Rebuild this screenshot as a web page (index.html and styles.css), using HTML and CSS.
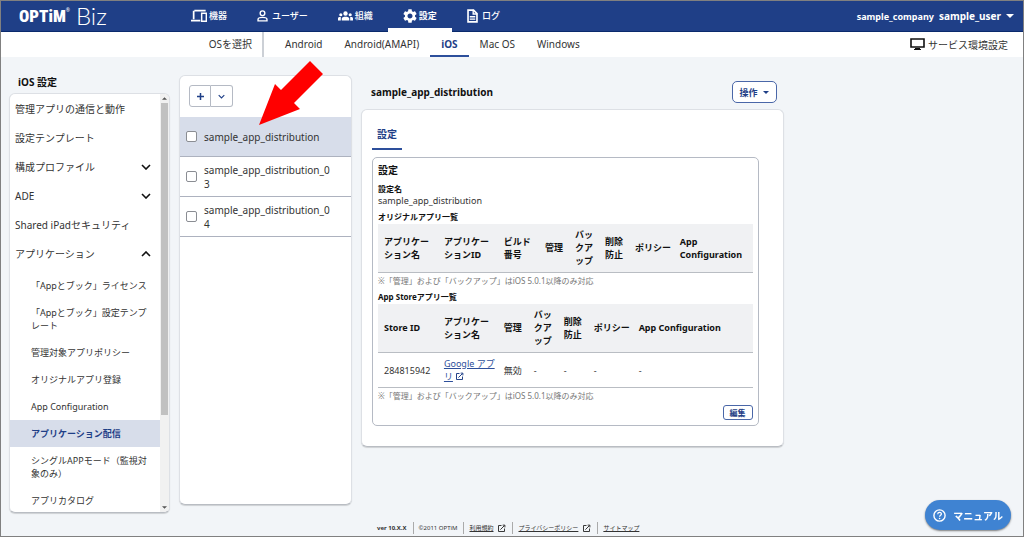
FILE: index.html
```html
<!DOCTYPE html>
<html lang="ja">
<head>
    <meta charset="UTF-8">
    <meta name="viewport" content="width=device-width, initial-scale=1.0">
    <title>OPTiM Biz - iOS 設定</title>
    <link rel="stylesheet" href="styles.css">
</head>
<body>
    <svg class="sprite" aria-hidden="true">
        <symbol id="icon-external" viewBox="0 0 24 24">
            <path d="M12 4H4v16h16v-8M15 3h6v6M20 4L9 15" fill="none" stroke="currentColor" stroke-width="2.6"/>
        </symbol>
        <symbol id="icon-down" viewBox="0 0 10 6">
            <path d="M1 1l4 4 4-4" fill="none" stroke="currentColor" stroke-width="1.6"/>
        </symbol>
        <symbol id="icon-caret" viewBox="0 0 10 5">
            <path d="M0 0h10L5 5z" fill="currentColor"/>
        </symbol>
    </svg>

    <header class="header">
        <a class="logo" href="#"><span class="logo-optim">OPTiM</span><sup>®</sup><span class="logo-biz">Biz</span></a>
        <nav class="main-nav">
            <a href="#">
                <svg width="16" height="14" viewBox="0 0 24 20"><path d="M5 2h17M4 2v13M0 17h14" fill="none" stroke="currentColor" stroke-width="2.6"/><path d="M16 6h7v12h-7z" fill="none" stroke="currentColor" stroke-width="2.2"/></svg>
                機器
            </a>
            <a href="#" class="nav-user">
                <svg width="11" height="14" viewBox="0 0 16 18"><circle cx="8" cy="5" r="3.4" fill="none" stroke="currentColor" stroke-width="2"/><path d="M1.5 16v-2c0-2 3.500-3 6.500-3s6.500 1 6.500 3v2z" fill="none" stroke="currentColor" stroke-width="2"/></svg>
                ユーザー
            </a>
            <a href="#">
                <svg width="15" height="14" viewBox="0 0 24 20"><g fill="currentColor"><circle cx="12" cy="6" r="3.500"/><circle cx="4.500" cy="8" r="2.500"/><circle cx="19.500" cy="8" r="2.500"/><path d="M6 17v-3c0-2 3-3 6-3s6 1 6 3v3zM0 17v-3c0-2 2-2.500 4.500-2.300V17zM24 17v-3c0-2-2-2.500-4.500-2.300V17z"/></g></svg>
                組織
            </a>
            <a href="#" class="active">
                <svg width="14" height="14" viewBox="2 2 20 20"><path fill="currentColor" d="M19.140 12.940c.04-.3.060-.61.060-.94 0-.32-.02-.64-.07-.94l2.030-1.580c.18-.14.230-.41.120-.61l-1.920-3.320c-.12-.22-.37-.29-.59-.22l-2.390.96c-.5-.38-1.030-.7-1.620-.94l-.36-2.540c-.04-.24-.24-.41-.48-.41h-3.840c-.24 0-.43.170-.47.410l-.36 2.540c-.59.240-1.130.570-1.620.940l-2.390-.96c-.22-.08-.47 0-.59.220L2.740 8.870c-.12.210-.08.470.120.610l2.030 1.580c-.05.300-.09.630-.09.940s.02.640.070.940l-2.030 1.580c-.18.140-.23.410-.12.610l1.920 3.320c.12.220.370.290.590.220l2.390-.96c.5.380 1.030.700 1.620.940l.36 2.540c.05.240.240.410.480.410h3.840c.24 0 .44-.17.470-.41l.36-2.540c.59-.24 1.130-.56 1.620-.94l2.390.96c.22.080.470 0 .59-.22l1.920-3.320c.12-.22.070-.47-.12-.61l-2.010-1.580zM12 15.600c-1.980 0-3.600-1.620-3.600-3.600s1.620-3.600 3.600-3.600 3.600 1.620 3.600 3.600-1.620 3.600-3.600 3.600z"/></svg>
                設定
            </a>
            <a href="#" class="nav-log">
                <svg width="11" height="14" viewBox="0 0 16 20"><path d="M1.500 1.500h8l5 5v12h-13z" fill="none" stroke="currentColor" stroke-width="2.400"/><path d="M9 1v6h6M4 11h8M4 14.500h8" fill="none" stroke="currentColor" stroke-width="2"/></svg>
                ログ
            </a>
        </nav>
        <button type="button" class="account">
            <span class="company">sample_company</span>
            <span class="user">sample_user</span>
            <svg width="8" height="4"><use href="#icon-caret"/></svg>
        </button>
    </header>

    <nav class="sub-nav">
        <span class="os-label">OSを選択</span>
        <a href="#">Android</a>
        <a href="#">Android(AMAPI)</a>
        <a href="#" class="active">iOS</a>
        <a href="#">Mac OS</a>
        <a href="#">Windows</a>
        <a href="#" class="env">
            <svg width="15" height="13" viewBox="0 0 15 13"><path d="M1 1h13v8H1z" fill="none" stroke="#111" stroke-width="1.600"/><path d="M5 10h5v1h1v1H4v-1h1z" fill="#111"/></svg>
            サービス環境設定
        </a>
    </nav>

    <main class="main">
        <aside class="sidebar">
            <h2>iOS 設定</h2>
            <div class="panel menu-panel">
                <ul class="menu">
                    <li><a href="#">管理アプリの通信と動作</a></li>
                    <li><a href="#">設定テンプレート</a></li>
                    <li><a href="#">構成プロファイル<svg width="10" height="6"><use href="#icon-down"/></svg></a></li>
                    <li><a href="#">ADE<svg width="10" height="6"><use href="#icon-down"/></svg></a></li>
                    <li><a href="#">Shared iPadセキュリティ</a></li>
                    <li>
                        <a href="#">アプリケーション<svg class="up" width="10" height="6"><use href="#icon-down"/></svg></a>
                        <ul class="submenu">
                            <li><a href="#">「Appとブック」ライセンス</a></li>
                            <li><a href="#">「Appとブック」設定テンプレート</a></li>
                            <li><a href="#">管理対象アプリポリシー</a></li>
                            <li><a href="#">オリジナルアプリ登録</a></li>
                            <li><a href="#">App Configuration</a></li>
                            <li><a href="#" class="active">アプリケーション配信</a></li>
                            <li><a href="#">シングルAPPモード（監視対象のみ）</a></li>
                            <li><a href="#">アプリカタログ</a></li>
                        </ul>
                    </li>
                </ul>
                <div class="scrollbar">
                    <svg class="up" width="5" height="3"><use href="#icon-caret"/></svg>
                    <div class="track"><div class="thumb"></div></div>
                    <svg width="5" height="3"><use href="#icon-caret"/></svg>
                </div>
            </div>
        </aside>

        <section class="panel list-panel">
            <div class="toolbar">
                <button type="button" aria-label="追加"><svg width="9" height="9" viewBox="0 0 9 9"><path d="M4.500 1v7M1 4.500h7" stroke="currentColor" stroke-width="1.500"/></svg></button>
                <button type="button" aria-label="メニュー"><svg width="7" height="5"><use href="#icon-down"/></svg></button>
            </div>
            <ul class="config-list">
                <li class="selected"><input type="checkbox" id="config1"><label for="config1">sample_app_distribution</label></li>
                <li><input type="checkbox" id="config2"><label for="config2">sample_app_distribution_03</label></li>
                <li><input type="checkbox" id="config3"><label for="config3">sample_app_distribution_04</label></li>
            </ul>
            <svg class="pointer" width="64" height="64" viewBox="0 0 64 64"><path d="M0 64L16 23l6 6L51 0l13 13-29 29 6 6z" fill="#f00"/></svg>
        </section>

        <section class="detail">
            <div class="detail-head">
                <h1>sample_app_distribution</h1>
                <button type="button" class="btn">操作<svg width="6" height="3"><use href="#icon-caret"/></svg></button>
            </div>
            <div class="panel detail-panel">
                <a href="#" class="tab">設定</a>
                <div class="card">
                    <h2>設定</h2>
                    <h3>設定名</h3>
                    <p class="name">sample_app_distribution</p>
                    <h3 class="table-title">オリジナルアプリ一覧</h3>
                    <table>
                        <colgroup>
                            <col class="w-l"><col class="w-l"><col class="w-m"><col class="w-s"><col class="w-s"><col class="w-s"><col class="w-p"><col>
                        </colgroup>
                        <thead>
                            <tr>
                                <th>アプリケーション名</th>
                                <th>アプリケーションID</th>
                                <th>ビルド<br>番号</th>
                                <th>管理</th>
                                <th>バックアップ</th>
                                <th>削除防止</th>
                                <th>ポリシー</th>
                                <th>App<br>Configuration</th>
                            </tr>
                        </thead>
                    </table>
                    <p class="note">※「管理」および「バックアップ」はiOS 5.0.1以降のみ対応</p>
                    <h3 class="table-title">App Storeアプリ一覧</h3>
                    <table>
                        <colgroup>
                            <col class="w-l"><col class="w-l"><col class="w-s"><col class="w-s"><col class="w-s"><col class="w-p"><col>
                        </colgroup>
                        <thead>
                            <tr>
                                <th>Store ID</th>
                                <th>アプリケーション名</th>
                                <th>管理</th>
                                <th>バックアップ</th>
                                <th>削除防止</th>
                                <th>ポリシー</th>
                                <th>App Configuration</th>
                            </tr>
                        </thead>
                        <tbody>
                            <tr>
                                <td>284815942</td>
                                <td><a href="#">Google アプリ</a> <svg class="ext" width="9" height="9"><use href="#icon-external"/></svg></td>
                                <td>無効</td>
                                <td>-</td>
                                <td>-</td>
                                <td>-</td>
                                <td>-</td>
                            </tr>
                        </tbody>
                    </table>
                    <p class="note">※「管理」および「バックアップ」はiOS 5.0.1以降のみ対応</p>
                    <button type="button" class="btn btn-small">編集</button>
                </div>
            </div>
        </section>
    </main>

    <footer class="footer">
        <b>ver 10.X.X</b>
        <span>©2011 OPTiM</span>
        <span><a href="#">利用規約</a><svg width="9" height="9"><use href="#icon-external"/></svg></span>
        <span><a href="#">プライバシーポリシー</a><svg width="9" height="9"><use href="#icon-external"/></svg></span>
        <span><a href="#">サイトマップ</a></span>
    </footer>

    <button type="button" class="manual">
        <svg width="13" height="13" viewBox="0 0 13 13"><circle cx="6.500" cy="6.500" r="5.600" fill="none" stroke="#fff" stroke-width="1.400"/><path d="M4.700 5.200c0-2.400 3.700-2.300 3.700-.2 0 1.300-1.800 1.300-1.800 2.700" fill="none" stroke="#fff" stroke-width="1.200"/><circle cx="6.600" cy="9.500" r=".8" fill="#fff"/></svg>
        マニュアル
    </button>
</body>
</html>
```
FILE: styles.css
```css
* {
    box-sizing: border-box;
}
body {
    display: flex;
    flex-direction: column;
    height: 100vh;
    margin: 0;
    border: 1px solid #808080;
    background-color: #f2f5f8;
    color: #333;
    font-family: "Noto Sans", "Noto Sans CJK JP", sans-serif;
    font-size: 10px;
    line-height: 14px;
}
h1, h2, h3, p, ul {
    margin: 0;
    padding: 0;
}
ul {
    list-style: none;
}
a {
    color: inherit;
    text-decoration: none;
}
button {
    font-family: inherit;
    cursor: pointer;
}
.sprite {
    display: none;
}
.up {
    transform: rotate(180deg);
}
.panel {
    background-color: #fff;
    border: 1px solid #dde0e5;
    border-bottom-color: #b9bdc3;
    border-radius: 6px;
    box-shadow: 0 1px 1px rgba(0, 0, 0, 0.15);
}

/* header */
.header {
    display: flex;
    flex: none;
    height: 31px;
    background-color: #1f3f87;
    border-bottom: 1px solid #0a2a6c;
    color: #fff;
}
.logo {
    display: flex;
    align-items: center;
    width: 175px;
    padding-left: 18px;
}
.logo-optim {
    font-family: "Roboto Condensed", Roboto, sans-serif;
    font-size: 17px;
    font-weight: 900;
}
.logo sup {
    align-self: flex-start;
    margin-top: 2px;
    font-size: 5px;
}
.logo-biz {
    margin-left: 6px;
    font-family: Lato, sans-serif;
    font-size: 24px;
    font-weight: 300;
}
.main-nav {
    display: flex;
}
.main-nav a {
    display: flex;
    align-items: center;
    gap: 2px;
    padding: 0 15px;
    font-size: 9px;
    font-weight: 500;
}
.main-nav .nav-user,
.main-nav .nav-log {
    gap: 4px;
}
.main-nav .active {
    border-top: 3px solid transparent;
    border-bottom: 4px solid #fff;
    margin-bottom: -1px;
    font-weight: bold;
}
.account {
    display: flex;
    align-items: center;
    gap: 5px;
    margin-left: auto;
    padding: 0 9px;
    border: 0;
    background: none;
    color: #fff;
    font-weight: bold;
}
.company {
    font-size: 9px;
}
.user {
    font-size: 10px;
}

/* OS tabs */
.sub-nav {
    display: flex;
    flex: none;
    height: 25px;
    background-color: #fff;
    line-height: 24px;
}
.sub-nav a {
    padding: 0 11px;
}
.sub-nav .os-label {
    width: 263px;
    margin-right: 10px;
    padding-right: 10px;
    border-right: 2px solid #ccd0d6;
    text-align: right;
}
.sub-nav .active {
    border-bottom: 2px solid #2d4f9b;
    color: #1f3f87;
    font-weight: bold;
}
.sub-nav .env {
    display: flex;
    align-items: center;
    gap: 3px;
    margin-left: auto;
    padding-right: 15px;
}

/* three columns */
.main {
    display: grid;
    flex: 1;
    min-height: 0;
    grid-template-columns: 161px 173px minmax(0, 11fr) 6fr;
    column-gap: 9px;
    padding: 18px 0 0 8px;
}
.sidebar {
    display: flex;
    flex-direction: column;
    min-height: 0;
}
.sidebar h2 {
    padding-left: 9px;
    margin-bottom: 4px;
    color: #111;
    font-size: 10px;
}
.menu-panel {
    display: flex;
    flex: 1;
    min-height: 0;
    margin-bottom: 9px;
    overflow: hidden;
}
.menu {
    flex: 1;
}
.menu a {
    display: flex;
    align-items: center;
    justify-content: space-between;
    height: 29px;
    padding: 0 9px 0 5px;
}
.menu svg {
    color: #111;
}
.submenu {
    padding-top: 4px;
}
.submenu a {
    display: block;
    height: auto;
    padding: 7px 10px 7px 21px;
    font-size: 9px;
    line-height: 13px;
    word-break: break-all;
}
.submenu .active {
    background-color: #d7ddea;
    color: #1f3f87;
    font-weight: bold;
}
.scrollbar {
    display: flex;
    flex-direction: column;
    align-items: center;
    width: 9px;
    padding: 3px 0;
    background-color: #f1f1f1;
    color: #555;
}
.track {
    flex: 1;
    width: 7px;
    padding: 3px 0;
}
.thumb {
    height: 78%;
    background-color: #c1c1c1;
}

/* settings list */
.list-panel {
    position: relative;
    min-height: 0;
    margin-bottom: 17px;
}
.toolbar {
    display: flex;
    padding: 9px 9px 10px;
}
.toolbar button {
    display: flex;
    align-items: center;
    justify-content: center;
    width: 22px;
    height: 22px;
    padding: 0;
    border: 1px solid #b5bac4;
    border-radius: 3px 0 0 3px;
    background-color: #fff;
    color: #1f3f87;
}
.toolbar button + button {
    border-left: 0;
    border-radius: 0 3px 3px 0;
}
.config-list li {
    display: flex;
    align-items: center;
    gap: 7px;
    height: 40px;
    padding: 0 18px 0 6px;
    border-bottom: 1px solid #adb2bf;
}
.config-list .selected {
    background-color: #d7ddea;
}
.config-list label {
    word-break: break-all;
}
.config-list input {
    appearance: none;
    flex: none;
    width: 11px;
    height: 11px;
    margin: 0;
    border: 1px solid #8a8d93;
    border-radius: 2px;
    background-color: #fff;
}
.pointer {
    position: absolute;
    top: -15px;
    left: 79px;
}

/* detail */
.detail-head {
    display: flex;
    align-items: center;
    justify-content: space-between;
    padding: 6px 7px 6px 10px;
}
.detail-head h1 {
    color: #111;
    font-size: 10px;
}
.btn {
    display: flex;
    align-items: center;
    gap: 5px;
    height: 22px;
    padding: 0 7px;
    border: 1px solid #4a67a8;
    border-radius: 5px;
    background-color: #fff;
    color: #1f3f87;
    font-size: 9px;
    font-weight: bold;
}
.btn-small {
    height: 15px;
    margin-left: auto;
    padding: 0 6px;
    border-radius: 3px;
    font-size: 8px;
}
.detail-panel {
    padding: 12px 24px 20px 10px;
}
.tab {
    display: inline-block;
    padding: 5px 5px 7px;
    border-bottom: 2px solid #2d4f9b;
    color: #1f3f87;
    font-weight: bold;
}
.card {
    margin-top: 7px;
    padding: 5px;
    border: 1px solid #b5bac4;
    border-radius: 5px;
}
.card h2 {
    color: #111;
    font-size: 10px;
}
.card h3 {
    margin-top: 6px;
    color: #111;
    font-size: 8px;
    line-height: 12px;
}
.card .name {
    font-size: 9px;
    line-height: 12px;
}
.card .table-title {
    margin: 4px 0 1px;
}
table {
    width: 100%;
    border-collapse: collapse;
    table-layout: fixed;
    font-size: 9px;
    line-height: 13px;
}
.w-l {
    width: 16%;
}
.w-m {
    width: 11%;
}
.w-s {
    width: 8%;
}
.w-p {
    width: 12%;
}
th, td {
    padding: 4px 0 4px 6px;
    border-bottom: 1px solid #b9bdc3;
    text-align: left;
}
th {
    padding-right: 2px;
    padding-bottom: 5px;
    background-color: #f0f1f3;
    color: #111;
    word-break: break-all;
}
td a {
    color: #2d4f9b;
    text-decoration: underline;
}
.ext {
    color: #1f3f87;
    vertical-align: -1px;
}
.note {
    margin-top: 2px;
    color: #777;
    font-size: 8px;
    line-height: 12px;
}
.card .btn {
    margin-top: 3px;
}

/* footer */
.footer {
    display: flex;
    align-items: center;
    flex: none;
    padding: 0 0 2px 376px;
    font-size: 6px;
    line-height: 12px;
}
.footer span {
    display: flex;
    align-items: center;
    gap: 4px;
    margin-left: 6px;
    padding-left: 5px;
    border-left: 1px solid #aaa;
}
.footer a {
    text-decoration: underline;
}
.manual {
    position: fixed;
    right: 13px;
    bottom: 7px;
    display: flex;
    align-items: center;
    gap: 7px;
    height: 30px;
    padding: 0 8px;
    border: 0;
    border-radius: 15px;
    background-color: #3f83d2;
    box-shadow: 0 1px 2px rgba(0, 0, 0, 0.5);
    color: #fff;
    font-size: 10px;
    font-weight: bold;
}
```
